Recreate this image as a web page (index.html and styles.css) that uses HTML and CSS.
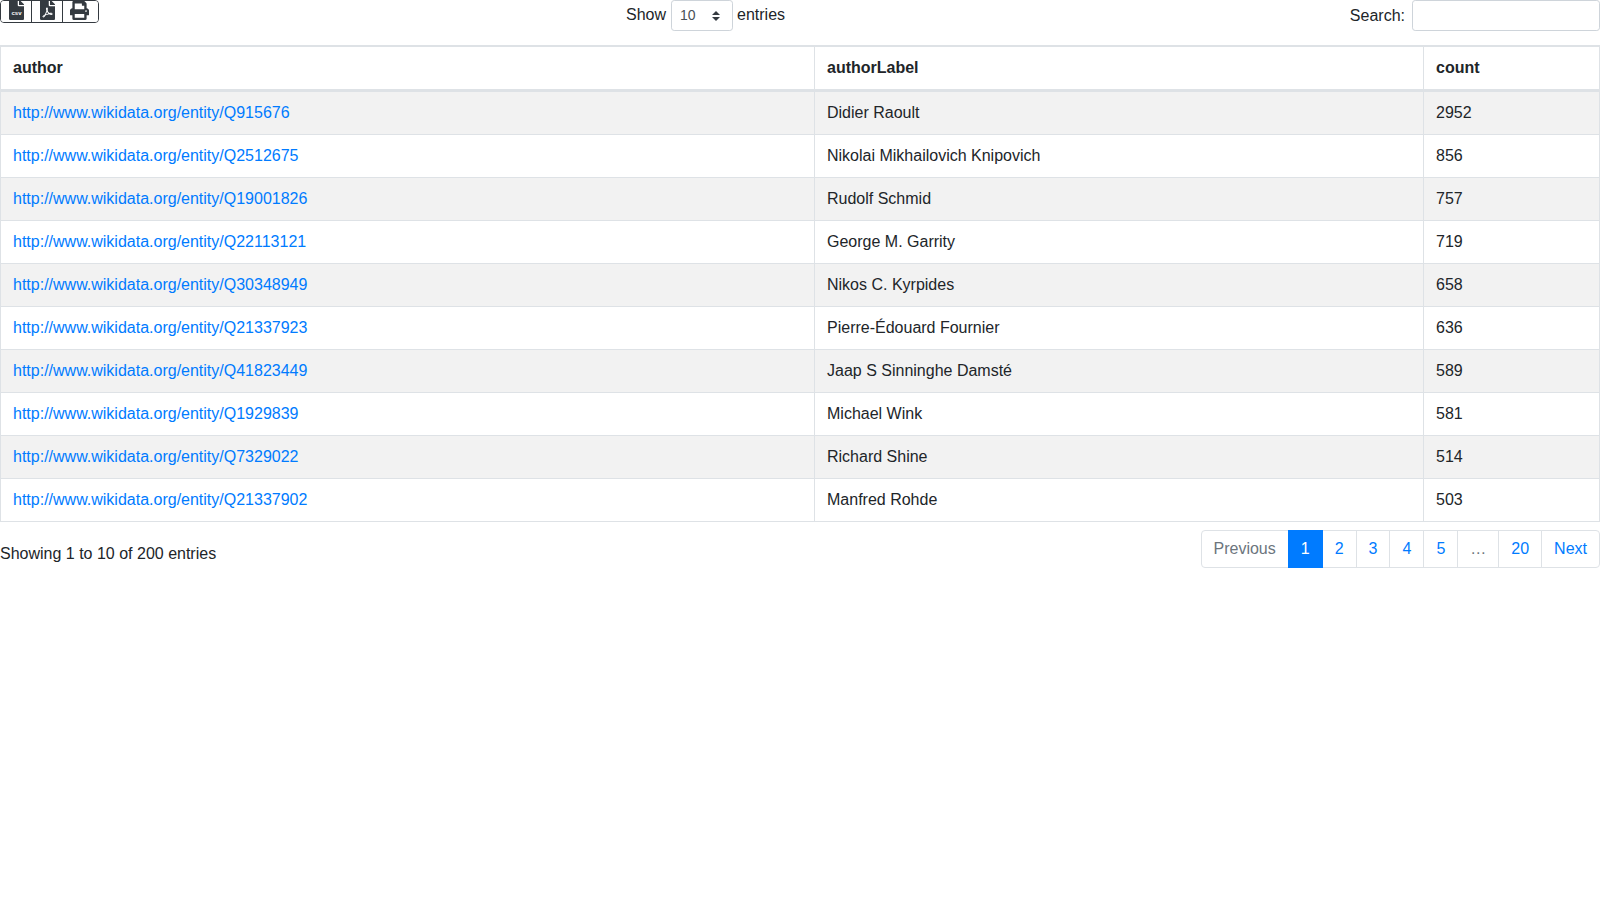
FILE: index.html
```html
<!DOCTYPE html>
<html lang="en">
<head>
<meta charset="utf-8">
<title>Authors</title>
<link rel="stylesheet" href="styles.css">
</head>
<body>
<div class="top">
  <div class="btn-group">
    <button class="btn" aria-label="CSV"><svg class="ico" viewBox="0 0 384 512"><path class="dark" d="M224 136V0H24C10.7 0 0 10.7 0 24v464c0 13.3 10.7 24 24 24h336c13.3 0 24-10.7 24-24V160H248c-13.2 0-24-10.8-24-24zm160-14.1v6.1H256V0h6.1c6.4 0 12.5 2.5 17 7l97.9 98c4.5 4.5 7 10.6 7 16.9z"/><text class="csv" x="192" y="390" text-anchor="middle">csv</text></svg></button>
    <button class="btn" aria-label="PDF"><svg class="ico" viewBox="0 0 384 512"><path class="dark" d="M181.9 256.1c-5-16-4.9-46.9-2-46.9 8.4 0 7.6 36.9 2 46.9zm-1.7 47.2c-7.7 20.2-17.3 43.3-28.4 62.7 18.3-7 39-17.2 62.9-21.9-12.7-9.6-24.9-23.4-34.5-40.8zM86.1 428.1c0 .8 13.2-5.4 34.9-40.2-6.7 6.3-29.1 24.5-34.9 40.2zM248 160h136v328c0 13.3-10.7 24-24 24H24c-13.3 0-24-10.7-24-24V24C0 10.7 10.7 0 24 0h200v136c0 13.2 10.8 24 24 24zm-8 171.8c-20-12.2-33.3-29-42.7-53.8 4.5-18.5 11.6-46.6 6.2-64.2-4.7-29.4-42.4-26.5-47.8-6.8-5 18.3-.4 44.1 8.1 77-11.6 27.6-28.7 64.6-40.8 85.8-.1 0-.1.1-.2.1-27.1 13.9-73.6 44.5-54.5 68 5.6 6.9 16 10 21.5 10 17.9 0 35.7-18 61.1-61.8 25.8-8.5 54.1-19.1 79-23.2 21.7 11.8 47.1 19.5 64 19.5 29.2 0 31.2-32 19.7-43.4-13.9-13.6-54.3-9.7-73.6-7.2zM377 105L279 7c-4.5-4.5-10.6-7-17-7h-6v128h128v-6.1c0-6.3-2.5-12.4-7-16.9zm-74.1 255.3c4.1-2.7-2.5-11.9-42.8-9 37.1 15.8 42.8 9 42.8 9z"/></svg></button>
    <button class="btn" aria-label="Print"><svg class="ico-print" viewBox="0 0 512 512"><path class="dark" d="M448 192V77.25c0-8.49-3.37-16.62-9.37-22.63L393.37 9.37c-6-6-14.14-9.37-22.63-9.37H96C78.33 0 64 14.33 64 32v160c-35.35 0-64 28.65-64 64v112c0 8.84 7.16 16 16 16h48v96c0 17.67 14.33 32 32 32h320c17.67 0 32-14.33 32-32v-96h48c8.84 0 16-7.16 16-16V256c0-35.35-28.65-64-64-64zm-64 256H128v-96h256v96zm0-224H128V64h192v48c0 8.84 7.16 16 16 16h48v96zm48 72c-13.25 0-24-10.75-24-24 0-13.26 10.75-24 24-24s24 10.74 24 24c0 13.25-10.75 24-24 24z"/></svg></button>
  </div>
  <label class="length">Show <select class="select"><option>10</option></select> entries</label>
  <label class="search">Search: <input class="input" type="search"></label>
</div>
<table class="table">
  <colgroup><col class="c1"><col class="c2"><col class="c3"></colgroup>
  <thead><tr><th>author</th><th>authorLabel</th><th>count</th></tr></thead>
  <tbody>
    <tr><td><a href="#">http://www.wikidata.org/entity/Q915676</a></td><td>Didier Raoult</td><td>2952</td></tr>
    <tr><td><a href="#">http://www.wikidata.org/entity/Q2512675</a></td><td>Nikolai Mikhailovich Knipovich</td><td>856</td></tr>
    <tr><td><a href="#">http://www.wikidata.org/entity/Q19001826</a></td><td>Rudolf Schmid</td><td>757</td></tr>
    <tr><td><a href="#">http://www.wikidata.org/entity/Q22113121</a></td><td>George M. Garrity</td><td>719</td></tr>
    <tr><td><a href="#">http://www.wikidata.org/entity/Q30348949</a></td><td>Nikos C. Kyrpides</td><td>658</td></tr>
    <tr><td><a href="#">http://www.wikidata.org/entity/Q21337923</a></td><td>Pierre-Édouard Fournier</td><td>636</td></tr>
    <tr><td><a href="#">http://www.wikidata.org/entity/Q41823449</a></td><td>Jaap S Sinninghe Damsté</td><td>589</td></tr>
    <tr><td><a href="#">http://www.wikidata.org/entity/Q1929839</a></td><td>Michael Wink</td><td>581</td></tr>
    <tr><td><a href="#">http://www.wikidata.org/entity/Q7329022</a></td><td>Richard Shine</td><td>514</td></tr>
    <tr><td><a href="#">http://www.wikidata.org/entity/Q21337902</a></td><td>Manfred Rohde</td><td>503</td></tr>
  </tbody>
</table>
<div class="bottom">
  <div class="info">Showing 1 to 10 of 200 entries</div>
  <ul class="pagination">
    <li class="page muted">Previous</li>
    <li class="page active">1</li>
    <li class="page">2</li>
    <li class="page">3</li>
    <li class="page">4</li>
    <li class="page">5</li>
    <li class="page muted">…</li>
    <li class="page">20</li>
    <li class="page">Next</li>
  </ul>
</div>
</body>
</html>
```
FILE: styles.css
```css
* { box-sizing: border-box; }
html, body { margin: 0; padding: 0; background: #fff; }
body { font-family: "Liberation Sans", Arial, sans-serif; font-size: 16px; line-height: 24px; color: #212529; }

.top { display: grid; grid-template-columns: 410px 591px 1fr; height: 45px; align-items: start; }
.btn-group { display: inline-flex; justify-self: start; height: 23px; border: 1px solid #343a40; border-radius: 4px; overflow: hidden; }
.btn { display: flex; align-items: flex-start; justify-content: center; height: 100%; margin: 0; padding: 0 0 0 1px; background: #fff; border: 0; border-left: 1px solid #343a40; width: 31px; }
.btn:first-child { border-left: 0; width: 30px; }
.btn:last-child { width: 36px; padding: 0 2px 0 0; }
.ico { display: block; width: 15px; height: 20px; margin-top: -1px; }
.ico-print { display: block; width: 19px; height: 19px; margin-top: 0; }
.dark { fill: #343a40; }
.csv { fill: #fff; font-family: "Liberation Sans", Arial, sans-serif; font-size: 155px; font-weight: 700; }

.length { justify-self: center; display: flex; align-items: center; gap: 5px; height: 29px; }
.select { align-self: flex-start; appearance: none; width: 62px; height: 31px; margin: 0 -1px 0 0; padding: 0 8px 2px; font: 14px "Liberation Sans", Arial, sans-serif; color: #495057; background: #fff url("data:image/svg+xml,%3Csvg xmlns='http://www.w3.org/2000/svg' width='8' height='10' viewBox='0 0 4 5'%3E%3Cpath fill='%23343a40' d='M2 0L0 2h4zm0 5L0 3h4z'/%3E%3C/svg%3E") no-repeat right 12px center; border: 1px solid #ced4da; border-radius: 3.2px; }

.search { justify-self: end; display: flex; align-items: center; gap: 7px; height: 31px; }
.input { width: 188px; height: 31px; margin: 0; padding: 4px 8px; font: 14px "Liberation Sans", Arial, sans-serif; background: #fff; border: 1px solid #ced4da; border-radius: 3.2px; outline: 0; }

.table { width: 100%; table-layout: fixed; border-collapse: collapse; border: 1px solid #dee2e6; }
.c1 { width: 814px; }
.c2 { width: 609px; }
.table th, .table td { padding: 9px 12px; text-align: left; vertical-align: top; border: 1px solid #dee2e6; }
.table th { border-top-width: 2px; border-bottom-width: 3px; font-weight: 700; }
.table tbody tr:nth-child(odd) { background: #f2f2f2; }
a { color: #007bff; text-decoration: none; }

.bottom { display: flex; justify-content: space-between; align-items: flex-start; padding-top: 8px; }
.info { padding-top: 12px; }
.pagination { display: flex; list-style: none; margin: 0; padding: 0; }
.page { padding: 6px 12px; height: 38px; color: #007bff; background: #fff; border: 1px solid #dee2e6; margin-left: -1px; }
.page:first-child { margin-left: 0; border-radius: 4px 0 0 4px; }
.page:last-child { border-radius: 0 4px 4px 0; }
.muted { color: #6c757d; }
.active { color: #fff; background: #007bff; border-color: #007bff; z-index: 1; }
```
